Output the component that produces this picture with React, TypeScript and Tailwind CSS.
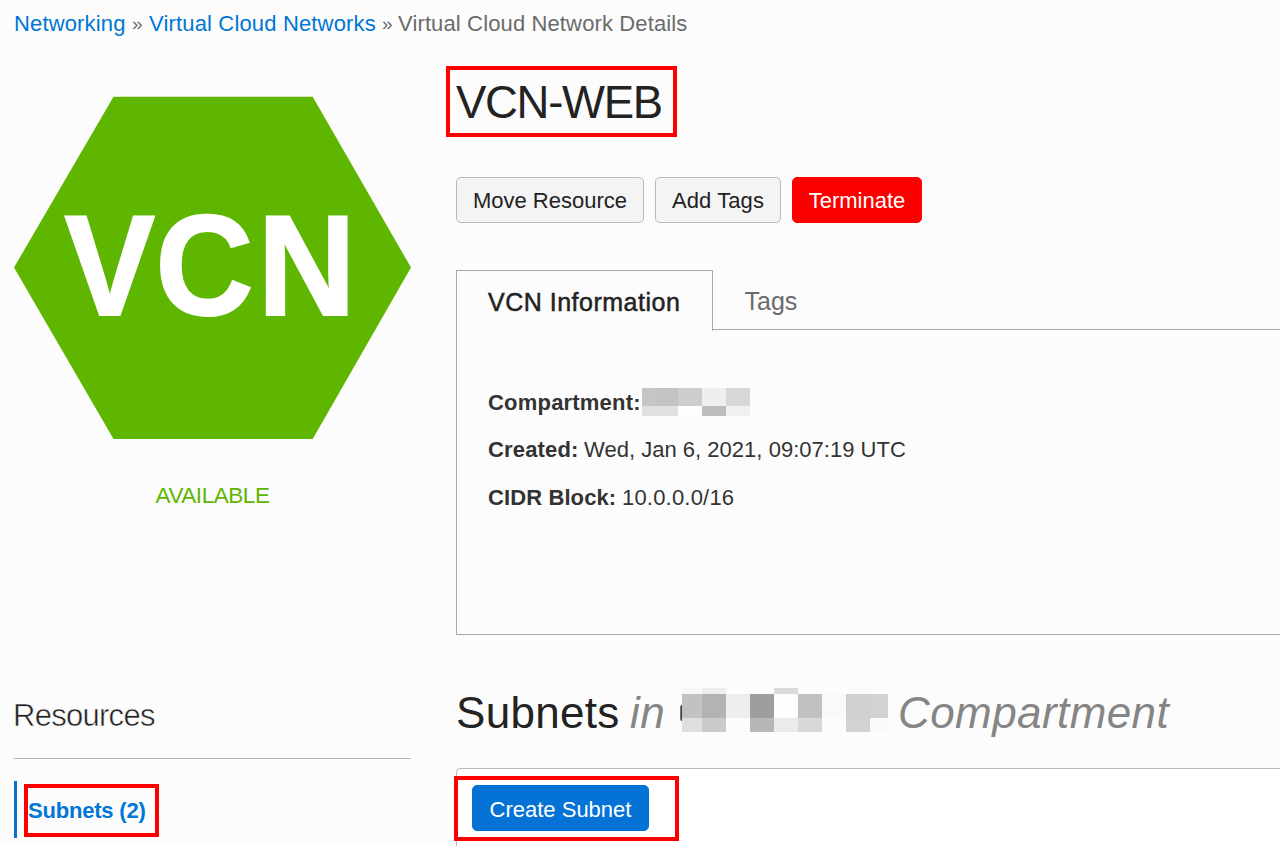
import type { ReactNode } from "react";

type Tile = [width: string, color: string];

function TileRow({ height, tiles }: { height: string; tiles: Tile[] }) {
  return (
    <div className={`flex ${height}`}>
      {tiles.map(([width, color], i) => (
        <div key={i} className={`${width} ${color} h-full shrink-0`} />
      ))}
    </div>
  );
}

/* Pixelated block that hides the compartment name in the details list. */
function CompartmentMask() {
  return (
    <div className="w-[108px]">
      <TileRow
        height="h-[18px]"
        tiles={[
          ["w-3", "bg-[#c5c5c5]"],
          ["w-6", "bg-[#c3c3c3]"],
          ["w-6", "bg-[#cdcdcd]"],
          ["w-6", "bg-[#efefef]"],
          ["w-6", "bg-[#d7d7d7]"],
        ]}
      />
      <TileRow
        height="h-[10px]"
        tiles={[
          ["w-3", "bg-[#e0e0e0]"],
          ["w-6", "bg-[#e1e1e1]"],
          ["w-6", "bg-[#fdfdfd]"],
          ["w-6", "bg-[#bdbdbd]"],
          ["w-6", "bg-[#f0f0f0]"],
        ]}
      />
    </div>
  );
}

/* Pixelated block that hides the compartment name in the section heading. */
function HeadingMask() {
  return (
    <div className="w-[206px]">
      <TileRow
        height="h-[6px]"
        tiles={[
          ["w-5", "bg-[#f7f7f7]"],
          ["w-6", "bg-[#eeeeee]"],
          ["w-12", "bg-transparent"],
          ["w-6", "bg-[#dadada]"],
        ]}
      />
      <TileRow
        height="h-6"
        tiles={[
          ["w-5", "bg-[#c2c2c2]"],
          ["w-6", "bg-[#b3b3b3]"],
          ["w-6", "bg-[#eeeeee]"],
          ["w-6", "bg-[#9e9e9e]"],
          ["w-6", "bg-[#fdfdfd]"],
          ["w-6", "bg-[#c1c1c1]"],
          ["w-6", "bg-[#f9f9f9]"],
          ["w-6", "bg-[#d1d1d1]"],
          ["w-[18px]", "bg-[#d2d2d2]"],
        ]}
      />
      <TileRow
        height="h-[14px]"
        tiles={[
          ["w-5", "bg-[#dfdfdf]"],
          ["w-6", "bg-[#cacaca]"],
          ["w-6", "bg-transparent"],
          ["w-6", "bg-[#b7b7b7]"],
          ["w-6", "bg-[#ebebeb]"],
          ["w-6", "bg-[#d8d8d8]"],
          ["w-6", "bg-transparent"],
          ["w-6", "bg-[#d2d2d2]"],
          ["w-[18px]", "bg-[#f9f9f9]"],
        ]}
      />
    </div>
  );
}

/* Red annotation frame laid over the element it surrounds. */
function Highlight({ className }: { className: string }) {
  return <div className={`pointer-events-none absolute border-4 border-[#ff0000] ${className}`} />;
}

function Button({ className, children }: { className: string; children: ReactNode }) {
  return (
    <button className={`h-[46px] rounded-[5px] border text-center text-[22px] leading-[46px] ${className}`}>
      {children}
    </button>
  );
}

function Breadcrumb() {
  return (
    <nav className="flex h-12 items-start pl-[13px] text-[22px] leading-[48px] text-[#6b6b6b]">
      <a className="w-[113px] pl-px tracking-[0.15px] text-[#0076d6]">Networking</a>
      <span className="w-[23px] pl-[6px] text-[19px]">»</span>
      <a className="w-[227px] tracking-[0.16px] text-[#0076d6]">Virtual Cloud Networks</a>
      <span className="w-[22px] pl-[6px] text-[19px]">»</span>
      <span className="tracking-[0.13px]">Virtual Cloud Network Details</span>
    </nav>
  );
}

function Sidebar() {
  return (
    <aside className="flex w-[397px] shrink-0 flex-col">
      <svg viewBox="0 0 397 343" className="mt-12 block h-[343px] w-[397px]">
        <polygon points="0,171.5 99.5,0.7 298.7,0.7 397,171.5 298.7,343 99.5,343" fill="#5fb600" />
        <text
          transform="translate(50.5 219) scale(0.955 1)"
          fill="#fff"
          stroke="#fff"
          strokeWidth="2"
          fontFamily="Liberation Sans, Arial, sans-serif"
          fontWeight="700"
          fontSize="142"
        >
          V<tspan dx="0.6">C</tspan>
          <tspan dx="4.6">N</tspan>
        </text>
      </svg>
      <div className="mt-[41px] text-center text-[22.5px] leading-8 tracking-[-0.45px] text-[#5fb600]">AVAILABLE</div>
      <h2 className="mt-[184px] h-[63px] border-b border-[#b0b6bd] text-[31px] leading-[40px] tracking-[-0.72px] text-[#222] [-webkit-text-stroke:0.5px_#fcfcfc]">
        <span className="-ml-px">Resources</span>
      </h2>
      <div className="relative mt-[22px] h-[57px] border-l-[3px] border-[#0572ce] pl-[11px] text-[22px] font-bold leading-[60px] tracking-[-0.2px] text-[#0076d6]">
        Subnets (2)
        <Highlight className="left-[7px] top-[3px] h-[53px] w-[135px]" />
      </div>
    </aside>
  );
}

function Details() {
  return (
    <main className="flex w-[840px] shrink-0 flex-col">
      <div className="relative h-[129px] pt-[30px]">
        <h1 className="text-[45.5px] leading-[50px] tracking-[-1.3px] text-[#222]">VCN-WEB</h1>
        <Highlight className="-left-[10px] top-[18px] h-[71px] w-[231px]" />
      </div>
      <div className="flex gap-[11px]">
        <Button className="w-[188px] border-[#b5bac2] bg-[#f4f4f4] text-[#222]">Move Resource</Button>
        <Button className="w-[126px] border-[#b5bac2] bg-[#f4f4f4] tracking-[0.1px] text-[#222]">Add Tags</Button>
        <Button className="w-[130px] border-[#ff0000] bg-[#fc0000] text-white">Terminate</Button>
      </div>
      <div className="mt-[47px] flex h-[60px]">
        <div className="h-[61px] w-[257px] shrink-0 border border-b-0 border-[#a8a8a8] pl-[31px] text-[25px] leading-[62px] tracking-[0.5px] text-[#222] [-webkit-text-stroke:0.5px_#222]">
          VCN Information
        </div>
        <div className="flex-1 border-b border-[#a8a8a8] pl-[31.5px] text-[25px] leading-[62px] text-[#6b6b6b]">
          Tags
        </div>
      </div>
      <div className="flex h-[305px] flex-col border-b border-l border-[#a8a8a8] pl-[31px] pt-[49px] text-[22px] leading-[47px] text-[#333]">
        <div className="flex">
          <b className="w-[154px] tracking-[0.2px]">Compartment:</b>
          <div className="pt-[9px]">
            <CompartmentMask />
          </div>
        </div>
        <div className="flex">
          <b className="w-[96px] tracking-[0.15px]">Created:</b>
          <span className="tracking-[0.02px]">Wed, Jan 6, 2021, 09:07:19 UTC</span>
        </div>
        <div className="mt-px flex">
          <b className="w-[134px] tracking-[0.1px]">CIDR Block:</b>
          <span className="tracking-[0.2px]">10.0.0.0/16</span>
        </div>
      </div>
      <h2 className="mt-[53px] flex h-[80px] text-[44px] leading-[50px] text-[#222]">
        <span className="w-[174px] tracking-[0.3px]">Subnets</span>
        <i className="w-[50px] tracking-[0.5px] text-[#858585]">in</i>
        <span className="mt-[17px] h-[16px] w-[2px] rounded-l-full bg-linear-to-r from-[#999] to-[#222]" />
        <HeadingMask />
        <i className="pl-[10px] tracking-[0.42px] text-[#858585]">Compartment</i>
      </h2>
      <div className="relative h-[78px] rounded-tl-[5px] border-l border-t border-[#b5bac2] bg-white pl-[15px] pt-4">
        <Button className="w-[177px] border-[#0572ce] bg-[#0572d6] pt-px text-white">Create Subnet</Button>
        <Highlight className="-left-[3px] top-[7px] h-[65px] w-[225px]" />
      </div>
    </main>
  );
}

export default function App() {
  return (
    <div className="h-[846px] w-[1280px] overflow-hidden whitespace-nowrap bg-[#fcfcfc] font-['Liberation_Sans',Arial,sans-serif]">
      <Breadcrumb />
      <div className="flex gap-[45px] pl-[14px]">
        <Sidebar />
        <Details />
      </div>
    </div>
  );
}
